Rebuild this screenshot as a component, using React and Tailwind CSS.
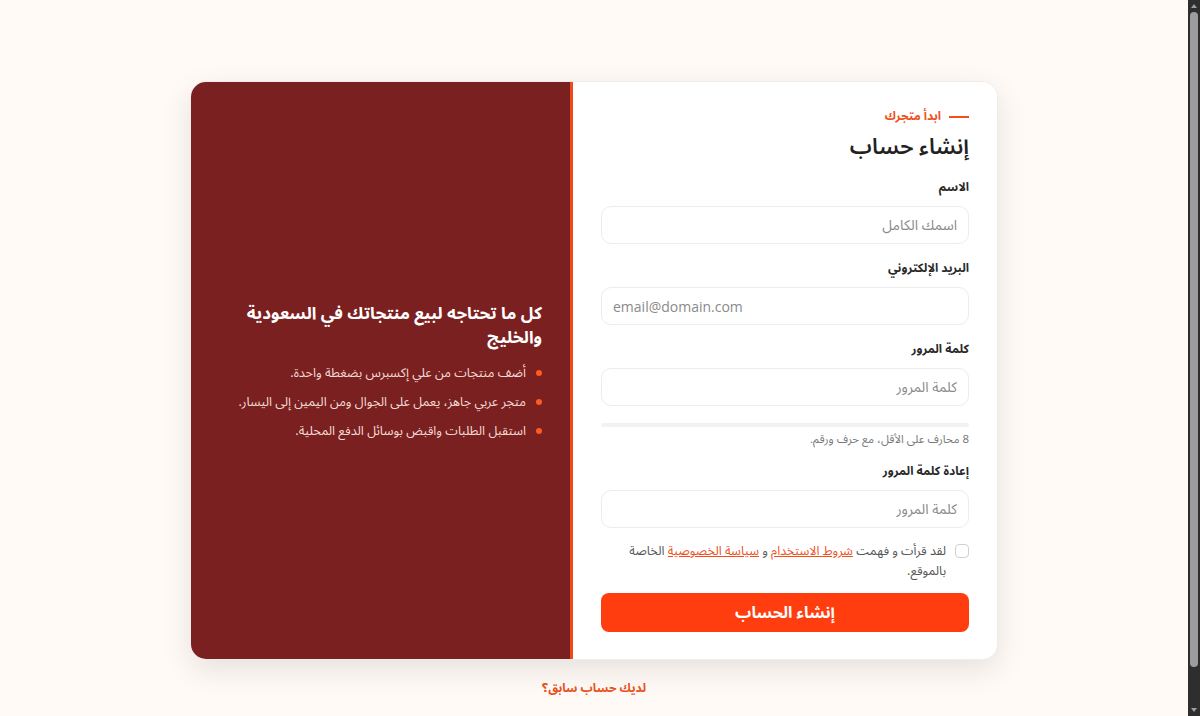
import React from "react";

const font = { fontFamily: '"Noto Sans Arabic", "DejaVu Sans", "Noto Sans", sans-serif' };

function Field({ label, placeholder, latin }) {
  return (
    <div className="flex flex-col">
      <label className="text-[12px] font-bold text-[#2a2a2a] leading-[16px] mb-[10px]">{label}</label>
      <input
        type="text"
        placeholder={placeholder}
        dir={latin ? "ltr" : "rtl"}
        className="h-[38px] w-full rounded-[10px] border border-[#ececec] bg-white px-[11px] text-[14px] text-[#333] placeholder:text-[#8a8a8a] outline-none"
        style={latin ? { fontFamily: '"Open Sans", "Noto Sans", sans-serif' } : font}
      />
    </div>
  );
}

function Scrollbar() {
  return (
    <div className="w-[12px] h-full bg-[#2e2e2e] flex flex-col items-center shrink-0">
      <svg width="8" height="6" viewBox="0 0 8 6" className="mt-[3px]">
        <path d="M4 1 L7 5 L1 5 Z" fill="#9d9d9d" />
      </svg>
      <div className="mt-[3px] w-[8px] h-[655px] rounded-full bg-[#9d9d9d]"></div>
      <div className="flex-1"></div>
      <svg width="8" height="6" viewBox="0 0 8 6" className="mb-[3px]">
        <path d="M1 1 L7 1 L4 5 Z" fill="#9d9d9d" />
      </svg>
    </div>
  );
}

export default function App() {
  return (
    <div className="flex h-[716px] overflow-hidden bg-[#fffaf6]">
      <div dir="rtl" className="flex-1 pt-[81px] flex flex-col items-center" style={font}>
        <div className="flex w-[808px] h-[579px] rounded-[16px] overflow-hidden bg-white shadow-[0_10px_30px_rgba(0,0,0,0.10)] border border-[#f1ece8]">
          {/* Right (form) panel */}
          <div className="w-[424px] bg-white px-7 pt-[27px] pb-[27px] flex flex-col">
            <div className="flex items-center gap-[8px] text-[12px] font-bold text-[#f0501c] leading-[16px]">
              <span className="block w-[20px] h-[2px] bg-[#f0501c]"></span>
              <span>ابدأ متجرك</span>
            </div>
            <h1 className="mt-[7px] text-[22px] font-semibold text-[#222] leading-[30px]">إنشاء حساب</h1>
            <div className="mt-[18px] flex flex-col gap-[17px]">
              <Field label="الاسم" placeholder="اسمك الكامل" />
              <Field label="البريد الإلكتروني" placeholder="email@domain.com" latin />
              <div className="flex flex-col">
                <Field label="كلمة المرور" placeholder="كلمة المرور" />
                <div className="mt-[17px] h-[4px] w-full rounded-full bg-[#f3f2f1]"></div>
                <p className="mt-[4px] text-[11.5px] text-[#7a7a7a] leading-[16px]">8 محارف على الأقل، مع حرف ورقم.</p>
              </div>
              <Field label="إعادة كلمة المرور" placeholder="كلمة المرور" />
            </div>
            <div className="mt-[13px] flex items-start gap-[9px]">
              <span className="mt-[3px] block w-[14px] h-[14px] shrink-0 rounded-[4px] border border-[#d0d0d0] bg-white"></span>
              <p className="text-[12.5px] leading-[20px] text-[#555] w-[340px]">
                لقد قرأت و فهمت{" "}
                <a href="#" className="text-[#f0501c] underline">شروط الاستخدام</a>
                {" "}و{" "}
                <a href="#" className="text-[#f0501c] underline">سياسة الخصوصية</a>
                {" "}الخاصة بالموقع.
              </p>
            </div>
            <button className="mt-[12px] h-[40px] w-full rounded-[8px] bg-[#ff3d0f] text-white text-[16px] font-bold">
              إنشاء الحساب
            </button>
          </div>
          {/* Left (brand) panel */}
          <div className="flex-1 bg-[#7b2020] border-r-[3px] border-[#f04a1a] flex items-center pr-[28px] pl-[20px]">
            <div className="flex flex-col">
              <h2 className="text-[17px] font-bold text-white leading-[24px]">
                كل ما تحتاجه لبيع منتجاتك في السعودية والخليج
              </h2>
              <ul className="mt-[14px] flex flex-col gap-[11px]">
                {[
                  "أضف منتجات من علي إكسبرس بضغطة واحدة.",
                  "متجر عربي جاهز، يعمل على الجوال ومن اليمين إلى اليسار.",
                  "استقبل الطلبات واقبض بوسائل الدفع المحلية.",
                ].map((t) => (
                  <li key={t} className="flex items-center gap-[10px] text-[12.7px] leading-[18px] text-[#f3dcd6]">
                    <span className="block w-[6px] h-[6px] rounded-full bg-[#ff5a1f] shrink-0"></span>
                    <span>{t}</span>
                  </li>
                ))}
              </ul>
            </div>
          </div>
        </div>
        <a href="#" className="mt-[21px] text-[12px] font-bold text-[#e8501c] leading-[16px]">لديك حساب سابق؟</a>
      </div>
      <Scrollbar />
    </div>
  );
}
